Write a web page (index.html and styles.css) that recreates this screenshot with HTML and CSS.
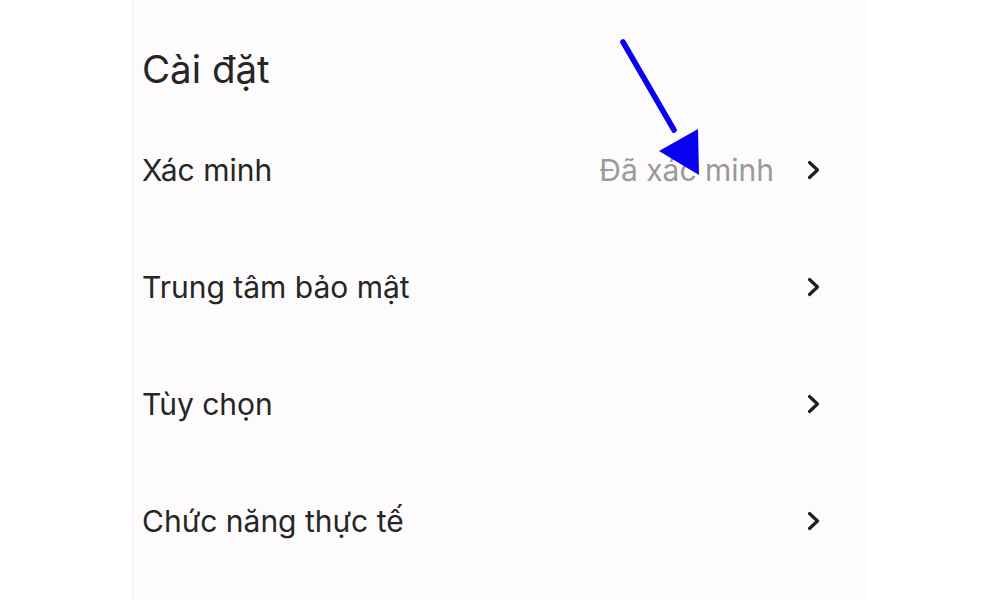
FILE: index.html
```html
<!DOCTYPE html>
<html lang="vi">
<head>
<meta charset="utf-8">
<link rel="stylesheet" href="styles.css">
</head>
<body>
<div class="page">
  <div class="panel">
    <h1 class="title">Cài đặt</h1>
    <ul class="list">
      <li class="row"><span class="label">Xác minh</span><span class="value">Đã xác minh</span><svg class="chev" viewBox="0 0 15 20"><path d="M3.5 2.5 L11.5 10 L3.5 17.5" /></svg></li>
      <li class="row"><span class="label">Trung tâm bảo mật</span><svg class="chev" viewBox="0 0 15 20"><path d="M3.5 2.5 L11.5 10 L3.5 17.5" /></svg></li>
      <li class="row"><span class="label">Tùy chọn</span><svg class="chev" viewBox="0 0 15 20"><path d="M3.5 2.5 L11.5 10 L3.5 17.5" /></svg></li>
      <li class="row"><span class="label">Chức năng thực tế</span><svg class="chev" viewBox="0 0 15 20"><path d="M3.5 2.5 L11.5 10 L3.5 17.5" /></svg></li>
    </ul>
    <svg class="arrow" viewBox="0 0 1000 600" width="1000" height="600">
      <line x1="623" y1="42" x2="674" y2="130" />
      <polygon points="659,151 698,129 699,175" />
    </svg>
  </div>
</div>
</body>
</html>
```
FILE: styles.css
```css
html, body {
  margin: 0;
  padding: 0;
  background: #ffffff;
}
body {
  font-family: "Inter", "Noto Sans", sans-serif;
  color: #262626;
}
.page {
  width: 1000px;
  height: 600px;
  overflow: hidden;
  position: relative;
}
.panel {
  margin-left: 132px;
  width: 734px;
  height: 600px;
  box-sizing: border-box;
  background: #fdfbfc;
  border-left: 1px solid #efedee;
  padding: 48px 45px 0 9px;
}
.title {
  margin: 0;
  font-size: 38.5px;
  font-weight: 400;
  line-height: 42px;
  height: 42px;
}
.list {
  list-style: none;
  margin: 21px 0 0;
  padding: 0;
}
.row {
  height: 117px;
  display: flex;
  align-items: center;
  font-size: 30px;
}
.label {
  flex: 1;
}
.value {
  color: #9a9a9a;
  margin-right: 32px;
}
.chev {
  width: 15px;
  height: 20px;
  fill: none;
  stroke: #1e1e1e;
  stroke-width: 3.2;
  stroke-linecap: round;
  stroke-linejoin: round;
}
.arrow {
  position: absolute;
  left: 0;
  top: 0;
  pointer-events: none;
}
.arrow line {
  stroke: #0a00f0;
  stroke-width: 5.5;
  stroke-linecap: round;
}
.arrow polygon {
  fill: #0a00f0;
}
```
